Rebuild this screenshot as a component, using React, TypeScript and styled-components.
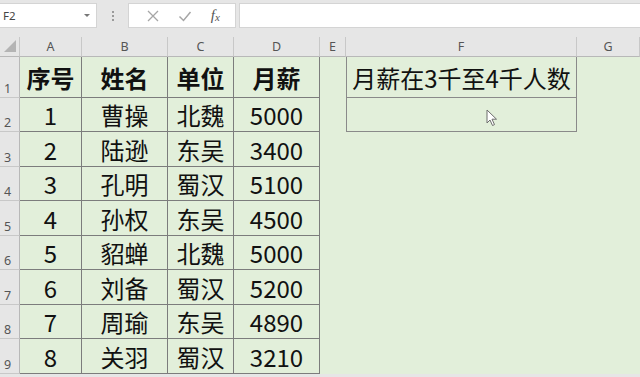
import styled, { createGlobalStyle } from "styled-components";

const GlobalStyle = createGlobalStyle`
  html, body {
    margin: 0;
    padding: 0;
    background: #e6e6e6;
  }
`;

const COLS = ["A", "B", "C", "D", "E", "F", "G"];
const COL_WIDTHS = [62, 86, 66, 86, 26, 231, 63];
const ROW_HEIGHTS = [41, 34, 35, 34, 35, 34, 35, 34, 35];

const DATA = [
  ["序号", "姓名", "单位", "月薪"],
  ["1", "曹操", "北魏", "5000"],
  ["2", "陆逊", "东吴", "3400"],
  ["3", "孔明", "蜀汉", "5100"],
  ["4", "孙权", "东吴", "4500"],
  ["5", "貂蝉", "北魏", "5000"],
  ["6", "刘备", "蜀汉", "5200"],
  ["7", "周瑜", "东吴", "4890"],
  ["8", "关羽", "蜀汉", "3210"],
];

const App = () => {
  return (
    <Page>
      <GlobalStyle />
      <FormulaBar>
        <NameBox>
          <span>F2</span>
          <Caret />
        </NameBox>
        <Grip>
          <i />
          <i />
          <i />
        </Grip>
        <ButtonBox>
          <ToolIcon viewBox="0 0 14 14">
            <path d="M2 2 L12 12 M12 2 L2 12" stroke="#a6a6a6" strokeWidth="1.3" fill="none" />
          </ToolIcon>
          <ToolIcon viewBox="0 0 14 14">
            <path d="M1.5 7.5 L5.5 11.5 L12.5 3" stroke="#a6a6a6" strokeWidth="1.5" fill="none" />
          </ToolIcon>
          <Fx>
            f<sub>x</sub>
          </Fx>
        </ButtonBox>
        <FormulaInput />
      </FormulaBar>

      <Sheet>
        <Corner>
          <svg width="12" height="12" viewBox="0 0 12 12">
            <path d="M12 0 L12 12 L0 12 Z" fill="#b4b4b4" />
          </svg>
        </Corner>
        {COLS.map((c) => (
          <ColHeader key={c}>{c}</ColHeader>
        ))}

        {ROW_HEIGHTS.map((_, r) => (
          <RowGroup key={r} r={r} />
        ))}

        <Pointer viewBox="0 0 12 18">
          <path
            d="M1 1 L1 14 L4 11 L6.5 16.5 L8.5 15.6 L6 10.2 L10.5 10.2 Z"
            fill="#ffffff"
            stroke="#6d6d6d"
            strokeWidth="1"
            strokeLinejoin="round"
          />
        </Pointer>
      </Sheet>
    </Page>
  );
};

const RowGroup = ({ r }: { r: number }) => {
  const row = DATA[r];
  return (
    <>
      <RowHeader>{r + 1}</RowHeader>
      {row.map((v, i) => (
        <TableCell key={i} $bold={r === 0}>
          {v}
        </TableCell>
      ))}
      <Cell />
      {r === 0 && <BoxCell>月薪在3千至4千人数</BoxCell>}
      {r === 1 && <BoxCell />}
      {r > 1 && <Cell />}
      <Cell />
    </>
  );
};

const Page = styled.div`
  width: 640px;
  height: 377px;
  overflow: hidden;
  background: #e6e6e6;
  font-family: "Noto Sans CJK SC", "Noto Sans", sans-serif;
`;

const FormulaBar = styled.div`
  display: flex;
  align-items: stretch;
  height: 25px;
  padding: 3px 0 9px 0;
`;

const NameBox = styled.div`
  width: 97px;
  box-sizing: border-box;
  background: #fff;
  border: 1px solid #d4d4d4;
  border-left: none;
  display: flex;
  align-items: center;
  justify-content: space-between;
  padding: 0 6px 0 3px;
  font-family: "Noto Sans", sans-serif;
  font-size: 11.5px;
  color: #444;
`;

const Caret = styled.div`
  width: 0;
  height: 0;
  border-left: 3px solid transparent;
  border-right: 3px solid transparent;
  border-top: 3px solid #777;
`;

const Grip = styled.div`
  width: 31px;
  display: flex;
  flex-direction: column;
  align-items: center;
  justify-content: center;
  gap: 2px;
  i {
    width: 2px;
    height: 2px;
    background: #9a9a9a;
  }
`;

const ButtonBox = styled.div`
  width: 108px;
  box-sizing: border-box;
  background: #fff;
  border: 1px solid #d4d4d4;
  display: flex;
  align-items: center;
  justify-content: space-around;
  padding: 0 6px 0 8px;
`;

const ToolIcon = styled.svg`
  width: 14px;
  height: 14px;
`;

const Fx = styled.span`
  font-family: "Liberation Serif", serif;
  font-style: italic;
  font-size: 15px;
  color: #555;
  sub {
    font-size: 11px;
    vertical-align: -1px;
  }
`;

const FormulaInput = styled.div`
  flex: 1;
  margin-left: 3px;
  background: #fff;
  border: 1px solid #d4d4d4;
  border-right: none;
`;

const Sheet = styled.div`
  position: relative;
  display: grid;
  grid-template-columns: 20px ${COL_WIDTHS.map((w) => `${w}px`).join(" ")};
  grid-template-rows: 20px ${ROW_HEIGHTS.map((h) => `${h}px`).join(" ")};
  background: #e2efda;
`;

const Corner = styled.div`
  background: #e6e6e6;
  border-right: 1px solid #c8c8c8;
  border-bottom: 1px solid #b8b8b8;
  box-sizing: border-box;
  display: flex;
  align-items: flex-end;
  justify-content: flex-end;
  padding: 0 3px 4px 0;
`;

const ColHeader = styled.div`
  background: #e6e6e6;
  border-right: 1px solid #c8c8c8;
  border-bottom: 1px solid #b8b8b8;
  box-sizing: border-box;
  display: flex;
  align-items: center;
  justify-content: center;
  font-family: "Noto Sans", sans-serif;
  font-size: 12.5px;
  color: #555;
`;

const RowHeader = styled.div`
  background: #e6e6e6;
  border-right: 1px solid #b8b8b8;
  border-bottom: 1px solid #c8c8c8;
  box-sizing: border-box;
  display: flex;
  align-items: flex-end;
  padding: 0 0 0 4px;
  font-family: "Noto Sans", sans-serif;
  font-size: 12.5px;
  line-height: 17px;
  color: #555;
`;

const Cell = styled.div`
  background: #e2efda;
`;

const TableCell = styled.div<{ $bold?: boolean }>`
  border-right: 1px solid #7c7c7c;
  border-bottom: 1px solid #7c7c7c;
  box-sizing: border-box;
  display: flex;
  align-items: center;
  justify-content: center;
  font-size: 24px;
  font-weight: ${(p) => (p.$bold ? 700 : 400)};
  color: #111;
`;

const BoxCell = styled.div`
  border-left: 1px solid #8a8a8a;
  border-right: 1px solid #8a8a8a;
  border-bottom: 1px solid #8a8a8a;
  box-sizing: border-box;
  display: flex;
  align-items: center;
  justify-content: center;
  font-size: 24px;
  color: #111;
  white-space: nowrap;
`;

const Pointer = styled.svg`
  position: absolute;
  left: 486px;
  top: 72px;
  width: 12px;
  height: 18px;
`;

export default App;
